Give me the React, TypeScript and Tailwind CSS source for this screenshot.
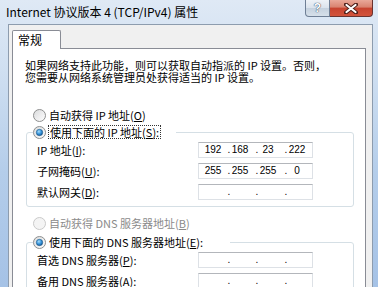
import React from "react";

const cjk = "font-['Noto_Sans_CJK_SC','Noto_Sans',sans-serif]";

function Radio({ checked, disabled }: { checked?: boolean; disabled?: boolean }) {
  return (
    <svg width="13" height="13" viewBox="0 0 13 13" className="shrink-0">
      <defs>
        <linearGradient id="rfill" x1="0" y1="0" x2="1" y2="1">
          <stop offset="0" stopColor="#d9dadb" />
          <stop offset="1" stopColor="#ffffff" />
        </linearGradient>
        <radialGradient id="rdot" cx="0.4" cy="0.35" r="0.7">
          <stop offset="0" stopColor="#a9dcf8" />
          <stop offset="0.5" stopColor="#3d9be0" />
          <stop offset="1" stopColor="#0c4f8e" />
        </radialGradient>
      </defs>
      <circle
        cx="6.5"
        cy="6.5"
        r="6"
        fill={disabled ? "#f4f4f4" : "url(#rfill)"}
        stroke={disabled ? "#c9c9c9" : "#8e8f8f"}
        strokeWidth="1"
      />
      {checked && <circle cx="6.5" cy="6.5" r="3.2" fill="url(#rdot)" stroke="#205a8a" strokeWidth="0.6" />}
    </svg>
  );
}

function IpBox({ v }: { v?: string[] }) {
  const p = v ?? ["", "", "", ""];
  return (
    <div className="w-[115px] h-[16px] shrink-0 bg-white border border-[#dde1e6] border-t-[#b3b6bb] flex items-center pl-[4px] text-[10px] leading-none font-['Liberation_Sans',sans-serif] text-black">
      <span className="w-[20px] text-center">{p[0]}</span>
      <span className="ml-[5px] w-[2px] flex justify-center">.</span>
      <span className="w-[20px] text-center">{p[1]}</span>
      <span className="ml-[6px] w-[2px] flex justify-center">.</span>
      <span className="w-[20px] text-center">{p[2]}</span>
      <span className="ml-[7px] w-[2px] flex justify-center">.</span>
      <span className="w-[20px] text-center">{p[3]}</span>
    </div>
  );
}

function Row({ label, k, rest, v }: { label: string; k: string; rest: string; v?: string[] }) {
  return (
    <div className="h-[16px] flex items-center">
      <div className="w-[161px] shrink-0 whitespace-nowrap">
        {label}(<span className="underline">{k}</span>){rest}
      </div>
      <IpBox v={v} />
    </div>
  );
}

export default function App() {
  return (
    <div
      className={`w-[378px] h-[287px] overflow-hidden flex flex-col bg-[linear-gradient(180deg,#dfe9f5_0%,#cfdff1_25%,#b4cdea_60%,#a5c2e6_100%)] ${cjk}`}
    >
      {/* title bar */}
      <div className="h-[24px] shrink-0 flex items-start justify-between">
        <div className="pl-[6px] h-[23px] flex items-center text-[12px] text-black whitespace-nowrap">
          Internet 协议版本 4 (TCP/IPv4) 属性
        </div>
        <div className="flex mr-[5px]">
          <div className="w-[25px] h-[17px] border border-t-0 border-[#6f7f95] rounded-bl-[4px] bg-[linear-gradient(180deg,#eef2f7_0%,#dbe3ec_50%,#c5d1de_51%,#d6e0ea_100%)] flex items-center justify-center">
            <span className="text-[12px] font-bold leading-none text-white font-['Liberation_Sans',sans-serif] [text-shadow:0_0_1px_#33455c,0_0_1px_#33455c]">
              ?
            </span>
          </div>
          <div className="w-[43px] h-[17px] border border-t-0 border-l-0 border-[#6a3330] rounded-br-[4px] bg-[linear-gradient(180deg,#e9a899_0%,#d9826f_45%,#c7432f_50%,#d2543c_100%)] flex items-center justify-center">
            <svg width="14" height="11" viewBox="0 0 14 11">
              <path d="M2 1.5 L12 9.5 M12 1.5 L2 9.5" stroke="#4a1f1a" strokeWidth="4" strokeLinecap="round" />
              <path d="M2.5 2 L11.5 9 M11.5 2 L2.5 9" stroke="#ffffff" strokeWidth="2.2" strokeLinecap="round" />
            </svg>
          </div>
        </div>
      </div>

      {/* frame + body */}
      <div className="flex-1 flex min-h-0">
        <div className="w-[8px] shrink-0" />
        <div className="w-[365px] shrink-0 bg-[#f0f0f0] border-l border-t border-r border-[#8d9cae] pl-[3px] pr-[6px] pt-[5px] flex flex-col">
          {/* tab */}
          <div className="w-[49px] h-[19px] -mb-[1px] relative z-10 bg-white border border-b-0 border-[#898c95] rounded-t-[2px] pl-[5px] flex items-center text-[12px] text-black">
            常规
          </div>
          {/* panel */}
          <div className="flex-1 bg-white border border-[#898c95] text-[11px] leading-[12px] text-black">
            <div className="pl-[12px] pt-[10px] whitespace-nowrap">
              <div className="leading-[12px]">如果网络支持此功能，则可以获取自动指派的 IP 设置。否则，</div>
              <div className="leading-[13px]">您需要从网络系统管理员处获得适当的 IP 设置。</div>
            </div>

            <div className="mt-[24px] pl-[20px] h-[14px] flex items-center gap-[3px] whitespace-nowrap">
              <Radio />
              <span>
                自动获得 IP 地址(<span className="underline">O</span>)
              </span>
            </div>

            <fieldset className="mt-[3px] ml-[13px] w-[328px] border border-[#d5dfe5] rounded-[3px] p-0">
              <legend className="ml-[6px] w-[143px] h-[14px] p-0">
                <div className="h-[14px] flex items-center gap-[2px] whitespace-nowrap">
                  <Radio checked />
                  <span className="border border-dotted border-[#333] px-[1px] leading-[12px]">
                    使用下面的 IP 地址(<span className="underline">S</span>):
                  </span>
                </div>
              </legend>
              <div className="flex flex-col gap-[5px] pl-[10px] pt-[3px] pb-[6px]">
                <Row label="IP 地址" k="I" rest=":" v={["192", "168", "23", "222"]} />
                <Row label="子网掩码" k="U" rest=":" v={["255", "255", "255", "0"]} />
                <Row label="默认网关" k="D" rest=":" />
              </div>
            </fieldset>

            <div className="mt-[9px] pl-[20px] h-[14px] flex items-center gap-[3px] whitespace-nowrap text-[#8a8a8a]">
              <Radio disabled />
              <span>
                自动获得 DNS 服务器地址(<span className="underline">B</span>)
              </span>
            </div>

            <fieldset className="mt-[5px] ml-[13px] w-[328px] border border-[#d5dfe5] rounded-[3px] p-0">
              <legend className="ml-[6px] w-[197px] h-[14px] p-0">
                <div className="h-[14px] flex items-center gap-[3px] whitespace-nowrap">
                  <Radio checked />
                  <span className="leading-[12px]">
                    使用下面的 DNS 服务器地址(<span className="underline">E</span>):
                  </span>
                </div>
              </legend>
              <div className="flex flex-col gap-[5px] pl-[10px] pt-[3px] pb-[6px]">
                <Row label="首选 DNS 服务器" k="P" rest=":" />
                <Row label="备用 DNS 服务器" k="A" rest=":" />
              </div>
            </fieldset>
          </div>
        </div>
        <div className="flex-1" />
      </div>
    </div>
  );
}
